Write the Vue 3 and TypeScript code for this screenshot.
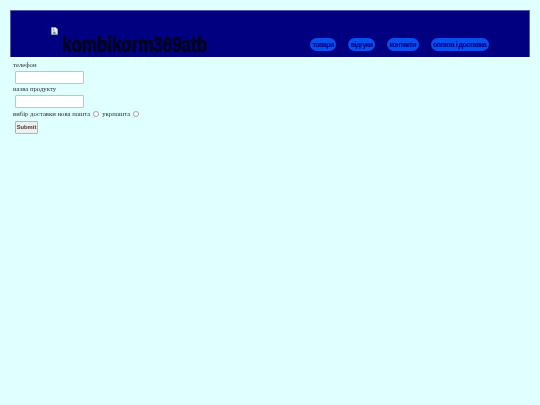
<script setup lang="ts">
const links: string[] = ['товари', 'відгуки', 'контакти', 'оплата і доставка']
</script>

<template>
  <div class="page">
    <header class="head">
      <div class="brand">
        <svg class="broken" width="7" height="8" viewBox="0 0 8 9">
          <path d="M0.5 0.5H5.5L7.5 2.5V8.5H0.5Z" fill="#eef2f8" stroke="#9aa6b5" stroke-width="0.7" />
          <path d="M1.5 7.5L3.5 4.5L6.5 7.5Z" fill="#5f9e5f" />
          <circle cx="3" cy="3" r="1" fill="#6f9fe0" />
        </svg>
        <span class="logo">kombikorm369atb</span>
      </div>
      <nav class="nav">
        <a v-for="l in links" :key="l" class="pill">{{ l }}</a>
      </nav>
    </header>
    <form class="form" @submit.prevent>
      <div class="label">телефон</div>
      <div class="field"><input class="input" type="text" /></div>
      <div class="label">назва продукту</div>
      <div class="field"><input class="input" type="text" /></div>
      <div class="label choice">
        <span>вибір доставки нова пошта</span><input class="radio" type="radio" name="d" />
        <span class="second">укрпошта</span><input class="radio" type="radio" name="d" />
      </div>
      <button class="submit" type="submit">Submit</button>
    </form>
  </div>
</template>

<style>
html, body { margin: 0; background: #e0ffff; }
</style>

<style scoped>
.page {
  height: 405px;
  padding: 10px 10.5px 0 10px;
  box-sizing: border-box;
  background: #e0ffff;
  font-family: "Liberation Serif", serif;
  font-size: 6.7px;
  color: #2a2a2a;
}
.head {
  height: 47px;
  box-sizing: border-box;
  background: #000080;
  border: 0.5px solid #5a5ab0;
  border-bottom: 0;
  display: flex;
  align-items: flex-end;
}
.brand {
  margin-left: 40px;
  width: 259px;
  height: 30px;
  display: flex;
  flex-shrink: 0;
  align-items: flex-start;
}
.broken { display: block; flex-shrink: 0; }
.logo {
  margin: 9px 0 0 4px;
  font: 700 22px/18px "Liberation Sans", sans-serif;
  color: #03031f;
  display: block;
  transform: scaleX(0.77);
  transform-origin: left center;
  white-space: nowrap;
  -webkit-text-stroke: 0.7px #03031f;
  filter: blur(0.3px);
}
.nav {
  display: flex;
  gap: 12px;
  margin-bottom: 6px;
  opacity: 0.99;
}
.pill {
  height: 13px;
  padding: 0 2.5px;
  border-radius: 7px;
  background: #0a50f0;
  color: #000a90;
  font: 700 7px/13px "Liberation Sans", sans-serif;
  letter-spacing: -0.5px;
  white-space: nowrap;
  -webkit-text-stroke: 0.2px #000a90;
}
.form { padding: 2px 0 0 3px; opacity: 0.99; }
.label { height: 10px; line-height: 12px; }
.field { height: 14px; padding: 2px 0 0 2px; box-sizing: border-box; }
.input {
  display: block;
  width: 69px;
  height: 12.5px;
  box-sizing: border-box;
  margin: 0;
  padding: 0;
  background: #fff;
  border: 1px solid #bcc4c8;
  border-radius: 1px;
}
.choice { display: flex; align-items: center; margin-top: 2px; white-space: nowrap; }
.radio {
  appearance: none;
  width: 6px;
  height: 6px;
  margin: 0 0 0 2.5px;
  box-sizing: border-box;
  flex-shrink: 0;
  background: #fff;
  border: 0.6px solid #a0a0a0;
  border-radius: 50%;
}
.second { margin-left: 3.5px; }
.submit {
  display: block;
  margin: 2px 0 0 2px;
  width: 23px;
  height: 13px;
  padding: 0;
  box-sizing: border-box;
  background: #efefef;
  border: 1px solid #b4b4b4;
  border-radius: 1px;
  color: #3a3a3a;
  font: 700 5.8px/11px "Liberation Sans", sans-serif;
}
</style>
